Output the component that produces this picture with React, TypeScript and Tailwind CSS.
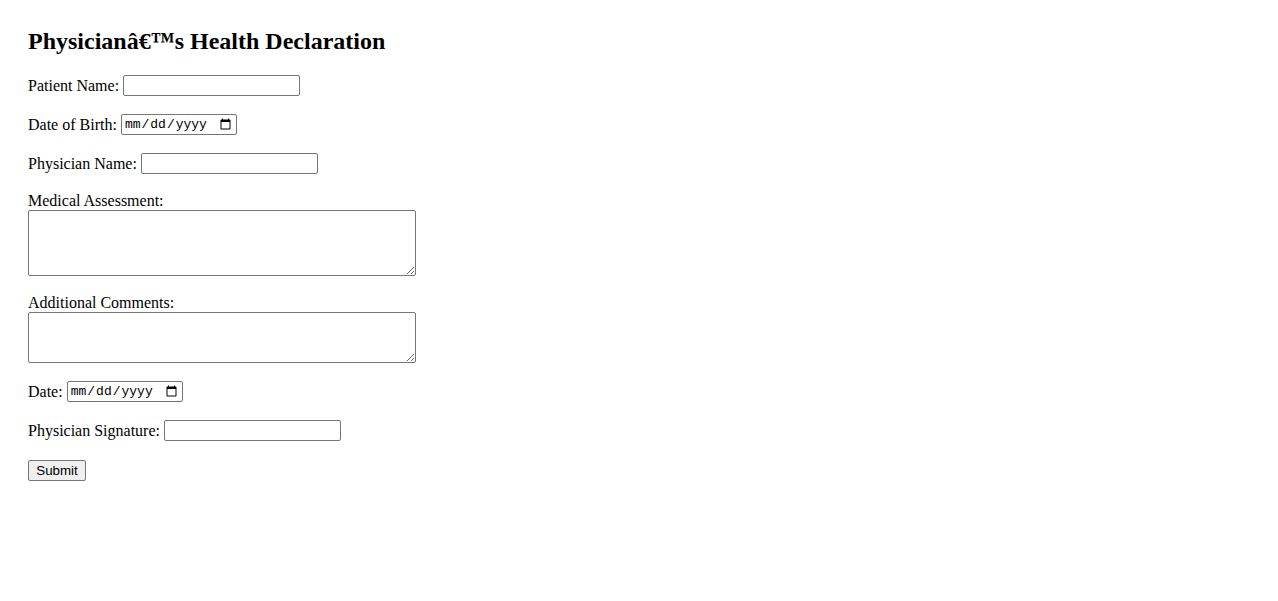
import React from 'react';

const serif = { fontFamily: '"Liberation Serif", "Times New Roman", serif' };

const inputCls =
  'h-[21px] border border-[#767676] rounded-[2px] bg-white px-[2px] text-[13px] text-black';
const dateCls =
  'h-[21px] w-[116px] border border-[#767676] rounded-[2px] bg-white px-[2px] text-[13px] font-["Liberation_Mono",monospace] text-black';
const areaCls =
  'block w-[388px] border border-[#767676] rounded-[2px] bg-white px-[2px] text-[13px]';

const App: React.FC = () => {
  return (
    <div className="min-h-[601px] bg-white text-black pt-[28px] pl-[28px] text-[16px]" style={serif}>
      <h2 className="text-[24px] font-bold leading-[27px] mb-[20px]">Physicianâ€™s Health Declaration</h2>
      <form onSubmit={(e) => e.preventDefault()}>
        <div className="flex items-center h-[21px] mb-[18px]">
          <label className="mr-[4px]">Patient Name:</label>
          <input type="text" className={`${inputCls} w-[177px]`} />
        </div>
        <div className="flex items-center h-[21px] mb-[18px]">
          <label className="mr-[4px]">Date of Birth:</label>
          <input type="date" className={dateCls} />
        </div>
        <div className="flex items-center h-[21px] mb-[18px]">
          <label className="mr-[4px]">Physician Name:</label>
          <input type="text" className={`${inputCls} w-[177px]`} />
        </div>
        <div className="mb-[18px]">
          <label className="block leading-[18px]">Medical Assessment:</label>
          <textarea className={`${areaCls} h-[66px]`} />
        </div>
        <div className="mb-[18px]">
          <label className="block leading-[18px]">Additional Comments:</label>
          <textarea className={`${areaCls} h-[51px]`} />
        </div>
        <div className="flex items-center h-[21px] mb-[18px]">
          <label className="mr-[4px]">Date:</label>
          <input type="date" className={dateCls} />
        </div>
        <div className="flex items-center h-[21px] mb-[19px]">
          <label className="mr-[4px]">Physician Signature:</label>
          <input type="text" className={`${inputCls} w-[177px]`} />
        </div>
        <button
          type="submit"
          className="block h-[21px] w-[58px] border border-[#767676] rounded-[2px] bg-[#efefef] text-[13.33px] text-black font-['Liberation_Sans',Arial,sans-serif]"
        >
          Submit
        </button>
      </form>
    </div>
  );
};

export default App;
